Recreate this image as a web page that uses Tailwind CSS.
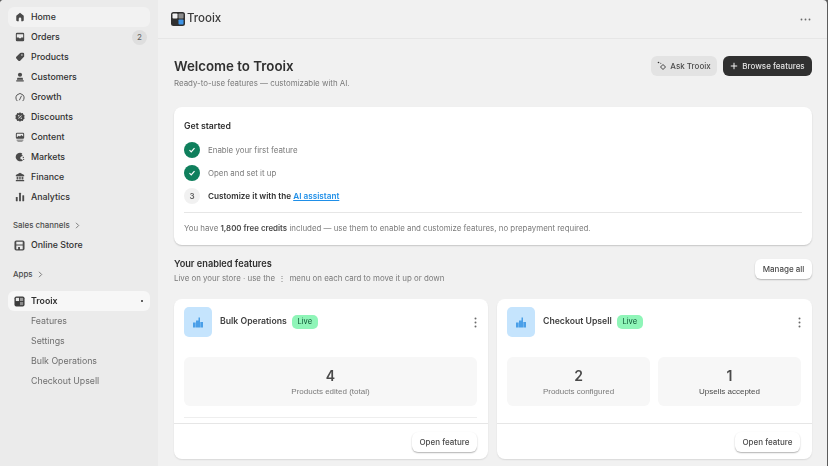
<!DOCTYPE html>
<html><head><meta charset="utf-8"><script src="https://cdn.jsdelivr.net/npm/@tailwindcss/browser@4"></script></head>
<body class="m-0 bg-[#5c5c5c]">
<div class="flex w-[827px] h-[466px] overflow-hidden rounded-t-[4px] blur-[0.3px] font-['Inter','Liberation_Sans',sans-serif] text-[#303030] bg-[#f1f1f1] antialiased">
  <aside class="w-[158px] shrink-0 h-full bg-[#ebebeb] px-2 pt-[7px] text-[8.8px] font-medium">
    <nav class="flex flex-col">
      <a class="h-5 flex items-center gap-[6px] pl-[7px] pr-2 rounded-md bg-[#f2f2f2]"><svg class="w-[10px] h-[10px] text-[#4a4a4a]" viewBox="0 0 12 12" fill="currentColor"><path d="M6 .8 1.500 4.600V10a1 1 0 0 0 1 1h2V8a1.500 1.500 0 0 1 3 0v3h2a1 1 0 0 0 1-1V4.600z"/></svg><span>Home</span></a>
      <a class="h-5 flex items-center gap-[6px] pl-[7px] pr-[3px]"><svg class="w-[10px] h-[10px] text-[#4a4a4a]" viewBox="0 0 12 12" fill="currentColor"><path fill-rule="evenodd" d="M2.500 1h7A1.500 1.500 0 0 1 11 2.500v7A1.500 1.500 0 0 1 9.500 11h-7A1.500 1.500 0 0 1 1 9.500v-7A1.500 1.500 0 0 1 2.500 1zM2.200 2.600v4h2.300l.6 1h1.800l.6-1h2.300v-4z"/></svg><span>Orders</span><span class="ml-auto w-[15px] h-[15px] rounded-full bg-[#dedede] text-[#616161] text-[8px] flex items-center justify-center font-normal">2</span></a>
      <a class="h-5 flex items-center gap-[6px] pl-[7px]"><svg class="w-[10px] h-[10px] text-[#4a4a4a]" viewBox="0 0 12 12" fill="currentColor"><path fill-rule="evenodd" d="M7 1h2.500A1.500 1.500 0 0 1 11 2.500V5a1.500 1.500 0 0 1-.5 1.100L6.200 10.400a1.500 1.500 0 0 1-2.100 0L1.600 7.900a1.500 1.500 0 0 1 0-2.100L5.900 1.500A1.500 1.500 0 0 1 7 1zm1.300 1.800a.9.900 0 1 0 0 1.800.9.900 0 0 0 0-1.800z"/></svg><span>Products</span></a>
      <a class="h-5 flex items-center gap-[6px] pl-[7px]"><svg class="w-[10px] h-[10px] text-[#4a4a4a]" viewBox="0 0 12 12" fill="currentColor"><circle cx="6" cy="3.300" r="2.500"/><path d="M2.800 6.800h6.400l.5 2.500H2.300zM1.500 10h9v1.300h-9z"/></svg><span>Customers</span></a>
      <a class="h-5 flex items-center gap-[6px] pl-[7px]"><svg class="w-[10px] h-[10px] text-[#4a4a4a]" viewBox="0 0 12 12" fill="none" stroke="currentColor" stroke-width="1.100" stroke-linecap="round"><path d="M2.400 10.500A5 5 0 1 1 9.600 10.500M5.400 9.500 7.600 5"/></svg><span>Growth</span></a>
      <a class="h-5 flex items-center gap-[6px] pl-[7px]"><svg class="w-[10px] h-[10px] text-[#4a4a4a]" viewBox="0 0 12 12" fill="currentColor"><path fill-rule="evenodd" d="M6 .4 7.500 1.500 9.400 1.300 10 3l1.600 1.100L11 6l.6 1.900L10 9l-.6 1.700-1.900-.2L6 11.600 4.500 10.500 2.600 10.700 2 9 .4 7.900 1 6 .4 4.100 2 3l.6-1.700 1.900.2zM7.600 3.800 3.800 7.600l.6.6 3.800-3.800zM4.500 3.700a.8.800 0 1 0 0 1.600.8.800 0 0 0 0-1.600zm3 3a.8.800 0 1 0 0 1.600.8.800 0 0 0 0-1.600z"/></svg><span>Discounts</span></a>
      <a class="h-5 flex items-center gap-[6px] pl-[7px]"><svg class="w-[10px] h-[10px] text-[#4a4a4a]" viewBox="0 0 12 12" fill="currentColor"><path fill-rule="evenodd" d="M2.500.8h7A1.500 1.500 0 0 1 11 2.300v4.400a1.500 1.500 0 0 1-1.500 1.500h-7A1.500 1.500 0 0 1 1 6.700V2.300A1.500 1.500 0 0 1 2.500.800zM2.200 2v4.300l2.300-1.800 1.500 1 1.500-2 2.300 1.800V2zM2 9.300h8v.9H2zM3 10.800h6v.7H3z"/></svg><span>Content</span></a>
      <a class="h-5 flex items-center gap-[6px] pl-[7px]"><svg class="w-[10px] h-[10px] text-[#4a4a4a]" viewBox="0 0 12 12" fill="currentColor"><path d="M6 .8a5.200 5.200 0 1 0 3.600 9l-1.800-1-1-.2L6.300 7l1-1.500L9 5V3.500L7.800 3l1-1.200A5.200 5.200 0 0 0 6 .8zM10 5.700a.8.800 0 1 0 0 1.600.8.800 0 0 0 0-1.600zM10.400 8.200a.7.700 0 1 0 0 1.400.7.700 0 0 0 0-1.400z"/></svg><span>Markets</span></a>
      <a class="h-5 flex items-center gap-[6px] pl-[7px]"><svg class="w-[10px] h-[10px] text-[#4a4a4a]" viewBox="0 0 12 12" fill="currentColor"><path d="M6 .8 11 3.500V5H1V3.500zM2 5.600h1.500v3.400H2zM4.400 5.600h1.300v3.400H4.400zM6.400 5.600h1.300v3.400H6.400zM8.500 5.600H10v3.400H8.500zM1 9.500h10V11H1z"/></svg><span>Finance</span></a>
      <a class="h-5 flex items-center gap-[6px] pl-[7px]"><svg class="w-[10px] h-[10px] text-[#4a4a4a]" viewBox="0 0 12 12" fill="currentColor"><rect x="1" y="6" width="2.200" height="5" rx=".6"/><rect x="4.900" y="1" width="2.200" height="10" rx=".6"/><rect x="8.800" y="3.800" width="2.200" height="7.200" rx=".6"/></svg><span>Analytics</span></a>
    </nav>
    <div class="h-[13px] mt-[12px] pl-[5px] flex items-center gap-[5px] text-[7.9px] text-[#4a4a4a]"><span>Sales channels</span><svg class="w-[5px] h-[7px]" viewBox="0 0 5 7" fill="none" stroke="#707070" stroke-width=".9"><path d="m1 .8 2.700 2.700L1 6.200"/></svg></div>
    <a class="h-5 mt-[3px] flex items-center gap-[6px] pl-[6px]"><svg class="w-[11px] h-[11px] text-[#4a4a4a]" viewBox="0 0 12 12" fill="currentColor"><path fill-rule="evenodd" d="M2.500.5h7a2 2 0 0 1 2 2v7a2 2 0 0 1-2 2h-7a2 2 0 0 1-2-2v-7a2 2 0 0 1 2-2zM2.500 2v2.800h7V2zm0 3.900v4.100h2V7.500h2V10h3V5.900z"/></svg><span>Online Store</span></a>
    <div class="h-[13px] mt-[13px] pl-[5px] flex items-center gap-[5px] text-[7.9px] text-[#4a4a4a]"><span>Apps</span><svg class="w-[5px] h-[7px]" viewBox="0 0 5 7" fill="none" stroke="#707070" stroke-width=".9"><path d="m1 .8 2.700 2.700L1 6.200"/></svg></div>
    <a class="h-5 mt-[10px] flex items-center gap-[6px] pl-[6px] pr-[7px] rounded-md bg-[#f7f7f7] font-semibold"><svg class="w-[11px] h-[11px]" viewBox="0 0 12 12"><rect x=".5" y=".5" width="11" height="11" rx="2" fill="#3c3c3c"/><rect x="2" y="2" width="3.500" height="3.500" fill="#e8e8e8"/><rect x="6.500" y="2" width="3.500" height="3.500" fill="#9a9a9a"/><rect x="6.500" y="6.500" width="3.500" height="3.500" fill="#8a8a8a"/></svg><span>Trooix</span><span class="ml-auto w-[2px] h-[2px] rounded-full bg-[#303030]"></span></a>
    <div class="flex flex-col font-normal text-[#6f6f6f]">
      <a class="h-5 flex items-center pl-[23px]">Features</a>
      <a class="h-5 flex items-center pl-[23px]">Settings</a>
      <a class="h-5 flex items-center pl-[23px]">Bulk Operations</a>
      <a class="h-5 flex items-center pl-[23px]">Checkout Upsell</a>
    </div>
  </aside>
  <main class="flex-1 min-w-0 flex flex-col">
    <header class="h-[39px] shrink-0 border-b border-[#e6e6e6] pl-[13px] pr-[16px] flex items-center">
      <svg class="w-[14px] h-[14px]" viewBox="0 0 14 14"><rect width="14" height="14" rx="2.500" fill="#303030"/><rect x="1.500" y="1.500" width="5" height="5" rx=".8" fill="#f2f2f2"/><rect x="7.500" y="1.500" width="5" height="5" rx=".8" fill="#8c8c8c"/><rect x="7.500" y="7.500" width="5" height="5" rx=".8" fill="#3f94e6"/></svg>
      <span class="ml-[2px] text-[11.5px] font-medium text-[#3a3a3a]">Trooix</span>
      <svg class="ml-auto w-[11px] h-[3px]" viewBox="0 0 11 3" fill="#6a6a6a"><circle cx="1.500" cy="1.500" r=".9"/><circle cx="5.500" cy="1.500" r=".9"/><circle cx="9.500" cy="1.500" r=".9"/></svg>
    </header>
    <div class="flex-1 pl-4 pr-[15px] pt-[17px]">
      <div class="flex items-start justify-between h-[51px]">
        <div>
          <h1 class="text-[13.3px] leading-[20px] font-semibold text-[#303030]">Welcome to Trooix</h1>
          <p class="text-[7.9px] leading-[12px] mt-[1px] text-[#7a7a7a]">Ready-to-use features — customizable with AI.</p>
        </div>
        <div class="flex gap-[6px]">
          <button class="h-5 w-[66px] rounded-md bg-[#e3e3e3] flex items-center justify-center gap-[3px] text-[8px] font-medium text-[#4a4a4a]"><svg class="w-[10px] h-[10px]" viewBox="0 0 10 10" fill="none" stroke="#303030"><path d="M6 3.500 8.500 6 6 8.500 3.500 6z" stroke-width=".9"/><circle cx="1.500" cy="1.500" r=".8" fill="#303030" stroke="none"/><circle cx="3.800" cy="2.300" r=".5" fill="#303030" stroke="none"/></svg>Ask Trooix</button>
          <button class="h-5 w-[89px] rounded-md bg-[#303030] flex items-center justify-center gap-[4px] text-[8px] font-medium text-[#e3e3e3]"><svg class="w-[8px] h-[8px]" viewBox="0 0 8 8" stroke="#f1f1f1" stroke-width="1"><path d="M4 .8v6.400M.8 4h6.400"/></svg>Browse features</button>
        </div>
      </div>
      <section class="h-[138px] bg-white rounded-lg shadow-[0_1px_1.500px_rgba(0,0,0,0.18)] px-[10px] pt-[13px]">
        <h2 class="text-[8.7px] leading-[12px] font-semibold text-[#303030]">Get started</h2>
        <div class="mt-[10px] flex flex-col gap-[7px] text-[7.9px]">
          <div class="flex items-center gap-2 h-4 text-[#7a7a7a]"><span class="w-4 h-4 rounded-full bg-[#0f7f5c] flex items-center justify-center"><svg class="w-2 h-2" viewBox="0 0 8 8" fill="none" stroke="#fff" stroke-width="1.200"><path d="m1.500 4.200 1.700 1.700 3.300-3.800"/></svg></span><span class="pt-[1px]">Enable your first feature</span></div>
          <div class="flex items-center gap-2 h-4 text-[#7a7a7a]"><span class="w-4 h-4 rounded-full bg-[#0f7f5c] flex items-center justify-center"><svg class="w-2 h-2" viewBox="0 0 8 8" fill="none" stroke="#fff" stroke-width="1.200"><path d="m1.500 4.200 1.700 1.700 3.300-3.800"/></svg></span><span class="pt-[1px]">Open and set it up</span></div>
          <div class="flex items-center gap-2 h-4 font-semibold text-[#303030] text-[8.2px]"><span class="w-4 h-4 rounded-full bg-[#f1f1f1] flex items-center justify-center text-[8px] text-[#616161]">3</span><span>Customize it with the <span class="text-[#1f8fe8] underline">AI assistant</span></span></div>
        </div>
        <div class="mt-[8px] border-t border-[#e6e6e6] pt-[9px] text-[7.9px] leading-[12px] text-[#7a7a7a]">You have <b class="font-semibold text-[#4a4a4a]">1,800 free credits</b> included — use them to enable and customize features, no prepayment required.</div>
      </section>
      <div class="mt-[12px] h-[42px] flex items-start justify-between">
        <div>
          <h2 class="text-[9.2px] leading-[13px] font-semibold text-[#303030]">Your enabled features</h2>
          <p class="text-[7.9px] leading-[12px] mt-[2px] text-[#7a7a7a]">Live on your store · use the <span class="mx-[1px]">⋮</span> menu on each card to move it up or down</p>
        </div>
        <button class="h-5 w-[57px] mt-[2px] rounded-md bg-white shadow-[0_1px_1.500px_rgba(0,0,0,0.25)] text-[8px] font-medium text-[#4a4a4a]">Manage all</button>
      </div>
      <div class="grid grid-cols-[314px_315px] gap-[9px]">
        <article class="h-[160px] bg-white rounded-lg shadow-[0_1px_1.500px_rgba(0,0,0,0.1)] flex flex-col">
          <div class="flex-1 pl-[10px] pr-[11px] pt-2">
            <div class="flex items-center h-[30px]">
              <span class="w-[28px] h-[30px] rounded-[5px] bg-[#c5e4fd] flex items-center justify-center"><svg class="w-[10px] h-[11px]" viewBox="0 0 10 10" fill="#4a9fe8"><path d="M0 5h2.700v5H0zM3 3h2.500v7H3zM5.500 0H7v10H5.500zM7.300 4.500H10V10H7.300z"/></svg></span>
              <span class="ml-2 text-[8.7px] font-semibold text-[#404040]">Bulk Operations</span>
              <span class="ml-[5px] h-[14px] w-[26px] rounded-[5px] bg-[#8ff5b8] text-[7.5px] flex items-center justify-center text-[#0c5132]">Live</span>
              <svg class="ml-auto w-[3px] h-[11px]" viewBox="0 0 3 11" fill="#6a6a6a"><circle cx="1.500" cy="1.500" r="1"/><circle cx="1.500" cy="5.500" r="1"/><circle cx="1.500" cy="9.500" r="1"/></svg>
            </div>
            <div class="mt-[20px] h-[49px] rounded-md bg-[#f7f7f7] flex flex-col items-center justify-center">
              <div class="text-[14px] leading-[18px] font-semibold text-[#4a4a4a]">4</div>
              <div class="text-[8px] leading-[11px] font-['Liberation_Sans',sans-serif] text-[#7a7a7a] mt-[1px]">Products edited (total)</div>
            </div>
            <div class="mt-[11px] border-t border-[#eeeeee]"></div>
          </div>
          <div class="h-[36px] border-t border-[#e6e6e6] pr-[11px] pt-[8px] flex justify-end"><button class="h-5 w-[65px] rounded-md bg-white shadow-[0_1px_1.500px_rgba(0,0,0,0.3)] text-[8px] font-medium text-[#4a4a4a]">Open feature</button></div>
        </article>
        <article class="h-[160px] bg-white rounded-lg shadow-[0_1px_1.500px_rgba(0,0,0,0.1)] flex flex-col">
          <div class="flex-1 pl-[10px] pr-[11px] pt-2">
            <div class="flex items-center h-[30px]">
              <span class="w-[28px] h-[30px] rounded-[5px] bg-[#c5e4fd] flex items-center justify-center"><svg class="w-[10px] h-[11px]" viewBox="0 0 10 10" fill="#4a9fe8"><path d="M0 5h2.700v5H0zM3 3h2.500v7H3zM5.500 0H7v10H5.500zM7.300 4.500H10V10H7.300z"/></svg></span>
              <span class="ml-2 text-[8.7px] font-semibold text-[#404040]">Checkout Upsell</span>
              <span class="ml-[5px] h-[14px] w-[26px] rounded-[5px] bg-[#8ff5b8] text-[7.5px] flex items-center justify-center text-[#0c5132]">Live</span>
              <svg class="ml-auto w-[3px] h-[11px]" viewBox="0 0 3 11" fill="#6a6a6a"><circle cx="1.500" cy="1.500" r="1"/><circle cx="1.500" cy="5.500" r="1"/><circle cx="1.500" cy="9.500" r="1"/></svg>
            </div>
            <div class="mt-[20px] grid grid-cols-2 gap-2">
              <div class="h-[49px] rounded-md bg-[#f7f7f7] flex flex-col items-center justify-center">
                <div class="text-[14px] leading-[18px] font-semibold text-[#4a4a4a]">2</div>
                <div class="text-[8px] leading-[11px] font-['Liberation_Sans',sans-serif] text-[#7a7a7a] mt-[1px]">Products configured</div>
              </div>
              <div class="h-[49px] rounded-md bg-[#f7f7f7] flex flex-col items-center justify-center">
                <div class="text-[14px] leading-[18px] font-semibold text-[#4a4a4a]">1</div>
                <div class="text-[8px] leading-[11px] font-['Liberation_Sans',sans-serif] text-[#4a4a4a] mt-[1px]">Upsells accepted</div>
              </div>
            </div>
          </div>
          <div class="h-[36px] border-t border-[#e6e6e6] pr-[12px] pt-[8px] flex justify-end"><button class="h-5 w-[65px] rounded-md bg-white shadow-[0_1px_1.500px_rgba(0,0,0,0.3)] text-[8px] font-medium text-[#4a4a4a]">Open feature</button></div>
        </article>
      </div>
    </div>
  </main>
</div>
</body></html>
